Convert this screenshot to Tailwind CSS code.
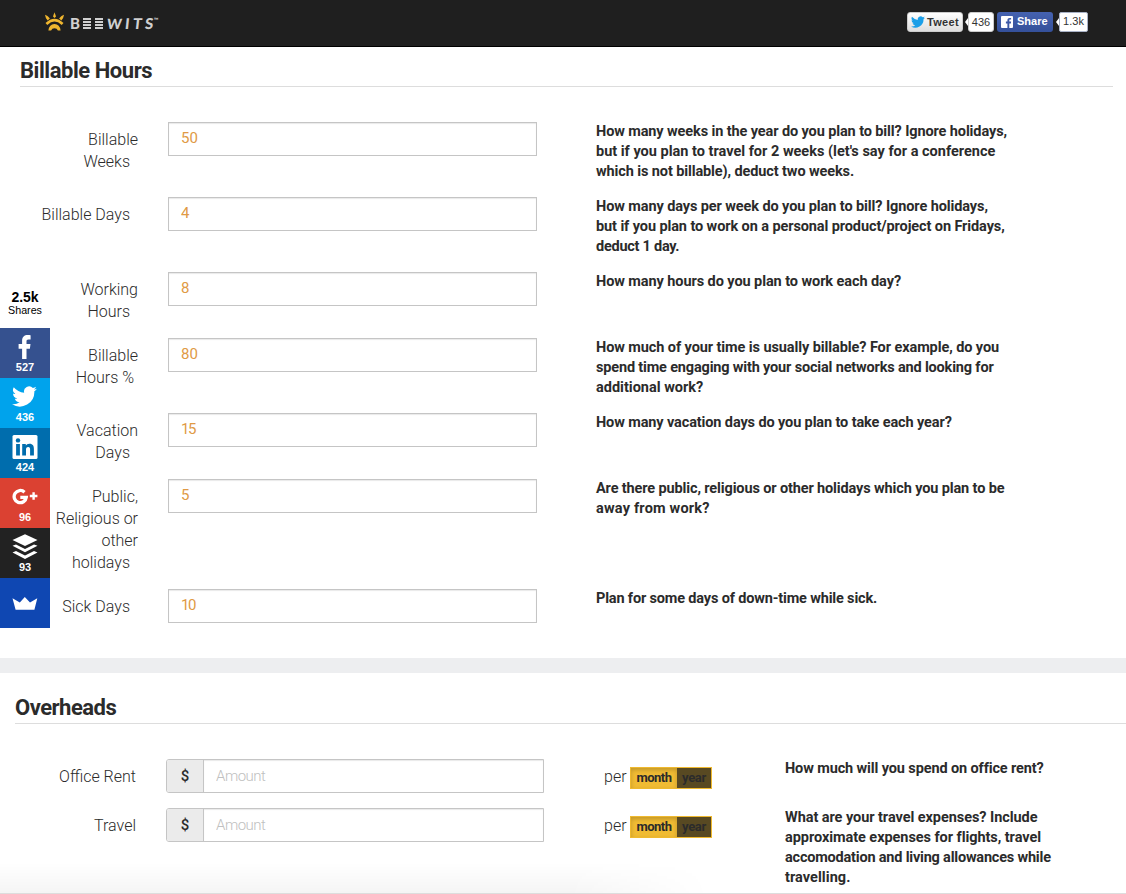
<!DOCTYPE html>
<html lang="en">
<head>
    <meta charset="UTF-8">
    <meta name="viewport" content="width=device-width, initial-scale=1.0">
    <script src="https://cdn.jsdelivr.net/npm/@tailwindcss/browser@4"></script>
    <title>Beewits - Hourly rate calculator</title>
</head>
<body class="relative w-full h-[894px] overflow-hidden bg-white text-[#2b2b2b] font-['Roboto',sans-serif]">
    <header class="h-[47px] bg-[#1f1f1f] border-b border-black flex items-start justify-between pl-[45px] pr-[38px]">
        <div class="flex pt-[12px] text-[#d0d0d0]">
            <svg class="w-[19px] h-[20px]" viewBox="0 0 19 20" fill="#f0b62f">
                <path d="M9.5 0.3 L11 4.6 L9.5 6 L8 4.6 Z"/>
                <path d="M0 2.8 Q2.6 3.6 4.9 6.4 L2.6 8.6 Q0.6 7 0 2.8 Z"/>
                <path d="M19 2.8 Q16.4 3.6 14.1 6.4 L16.4 8.6 Q18.4 7 19 2.8 Z"/>
                <path d="M1.4 12 Q9.5 4.4 17.6 12" fill="none" stroke="#f0b62f" stroke-width="2.7"/>
                <path d="M3.4 18.6 Q4.2 12 9.5 12 Q14.8 12 15.6 18.6 L12.9 18.6 Q12 16.2 9.5 16.2 Q7 16.2 6.1 18.6 Z"/>
            </svg>
            <div class="flex h-[23px] items-center pl-[6px] font-['Lato',sans-serif] font-black text-[15px] leading-none" aria-label="Beewits">
                <span class="w-[13px]">B</span>
                <span class="w-[12px] flex flex-col gap-px">
                    <i class="w-[8px] h-[2px] bg-[#d0d0d0]"></i><i class="w-[8px] h-[2px] bg-[#d0d0d0]"></i><i class="w-[8px] h-[2px] bg-[#d0d0d0]"></i><i class="w-[8px] h-[2px] bg-[#d0d0d0]"></i>
                </span>
                <span class="w-[12px] flex flex-col gap-px">
                    <i class="w-[8px] h-[2px] bg-[#d0d0d0]"></i><i class="w-[8px] h-[2px] bg-[#d0d0d0]"></i><i class="w-[8px] h-[2px] bg-[#d0d0d0]"></i><i class="w-[8px] h-[2px] bg-[#d0d0d0]"></i>
                </span>
                <span class="w-[18px] text-[14px] -skew-x-6">W</span>
                <span class="w-[8px] -skew-x-6">I</span>
                <span class="w-[12px] -skew-x-6">T</span>
                <span class="w-[9px] -skew-x-6">S</span>
                <span class="text-[6px] -mt-[7px]">™</span>
            </div>
        </div>
        <div class="flex pt-[12px] text-[11px] font-['Liberation_Sans',sans-serif]">
            <div class="w-[56px] h-[20px] rounded-[3px] border border-[#ccc] bg-linear-to-b from-white to-[#dedede] flex items-center pl-[3px] gap-[2px] font-bold text-[#333]">
                <svg class="w-[14px] h-[14px]" viewBox="0 0 24 24" fill="#1b9fe8"><path d="M23.9 4.6a10 10 0 0 1-2.8.8 5 5 0 0 0 2.1-2.7 10 10 0 0 1-3.1 1.2 4.9 4.9 0 0 0-8.4 4.5A14 14 0 0 1 1.7 3.2a4.9 4.9 0 0 0 1.5 6.5 5 5 0 0 1-2.2-.6 4.9 4.9 0 0 0 4 4.9 5 5 0 0 1-2.3.1 4.9 4.9 0 0 0 4.6 3.4A9.9 9.9 0 0 1 0 19.5 14 14 0 0 0 21.5 7.1a10 10 0 0 0 2.4-2.5z"/></svg>
                <span class="tracking-[0.3px]">Tweet</span>
            </div>
            <div class="flex items-center ml-[2px]">
                <div class="border-y-4 border-y-transparent border-r-[3px] border-r-white"></div>
                <div class="w-[26px] h-[20px] rounded-[3px] bg-white border border-[#ccc] flex items-center justify-center text-[#333]">436</div>
            </div>
            <div class="ml-[3px] w-[56px] h-[20px] rounded-[3px] bg-linear-to-b from-[#4562b0] to-[#34509a] flex items-center pl-[4px] gap-[4px] font-bold text-white">
                <svg class="w-[12px] h-[12px]" viewBox="0 0 12 12"><rect width="12" height="12" rx="1" fill="#fff"/><path d="M6.4 12V7.4H4.9V5.6h1.5V4.3c0-1.6.9-2.4 2.3-2.4h1.4v1.7H9.2c-.7 0-.9.3-.9.9v1.1h1.8l-.2 1.8H8.3V12z" fill="#3d59a6"/></svg>
                <span class="-mt-px">Share</span>
            </div>
            <div class="flex items-center ml-[3px]">
                <div class="border-y-4 border-y-transparent border-r-[3px] border-r-white"></div>
                <div class="w-[29px] h-[20px] rounded-[2px] bg-white border border-[#a9b2c6] flex items-center justify-center text-[#333] pb-px">1.3k</div>
            </div>
        </div>
    </header>

    <main>
        <section class="pl-[20px] pr-[13px] pt-[8px] h-[611px]">
            <h2 class="h-[32px] border-b border-[#ddd] text-[22px] leading-[31px] font-bold tracking-[-0.45px]">Billable Hours</h2>
            <div class="pt-[34px] text-[16px] leading-[22px] font-light">
                <div class="flex h-[75px]">
                    <label class="w-[118px] pt-[8px] text-right">Billable<br><span class="pr-[8px]">Weeks</span></label>
                    <input value="50" class="ml-[30px] mt-px w-[369px] h-[34px] border border-[#c5c5c5] px-[12px] pb-[3px] text-[15px] font-normal text-[#e09a45] shadow-[inset_0_1px_1px_rgba(0,0,0,0.09)]">
                    <p class="ml-[59px] pt-px whitespace-nowrap text-[14.5px] leading-[20px] font-bold tracking-[-0.11px]">How many weeks in the year do you plan to bill? Ignore holidays,<br><span class="tracking-normal">but if you plan to travel for 2 weeks (let's say for a conference</span><br>which is not billable), deduct two weeks.</p>
                </div>
                <div class="flex h-[75px]">
                    <label class="w-[118px] pt-[8px] text-right"><span class="pr-[8px]">Billable Days</span></label>
                    <input value="4" class="ml-[30px] mt-px w-[369px] h-[34px] border border-[#c5c5c5] px-[12px] pb-[3px] text-[15px] font-normal text-[#e09a45] shadow-[inset_0_1px_1px_rgba(0,0,0,0.09)]">
                    <p class="ml-[59px] pt-px whitespace-nowrap text-[14.5px] leading-[20px] font-bold tracking-[-0.1px]">How many days per week do you plan to bill? Ignore holidays,<br>but if you plan to work on a personal product/project on Fridays,<br><span class="tracking-[-0.25px]">deduct 1 day.</span></p>
                </div>
                <div class="flex h-[66px]">
                    <label class="w-[118px] pt-[8px] text-right">Working<br><span class="pr-[8px]">Hours</span></label>
                    <input value="8" class="ml-[30px] mt-px w-[369px] h-[34px] border border-[#c5c5c5] px-[12px] pb-[3px] text-[15px] font-normal text-[#e09a45] shadow-[inset_0_1px_1px_rgba(0,0,0,0.09)]">
                    <p class="ml-[59px] pt-px whitespace-nowrap text-[14.5px] leading-[20px] font-bold tracking-[-0.08px]">How many hours do you plan to work each day?</p>
                </div>
                <div class="flex h-[75px]">
                    <label class="w-[118px] pt-[8px] text-right">Billable<br><span class="pr-[4px]">Hours %</span></label>
                    <input value="80" class="ml-[30px] mt-px w-[369px] h-[34px] border border-[#c5c5c5] px-[12px] pb-[3px] text-[15px] font-normal text-[#e09a45] shadow-[inset_0_1px_1px_rgba(0,0,0,0.09)]">
                    <p class="ml-[59px] pt-px whitespace-nowrap text-[14.5px] leading-[20px] font-bold tracking-[-0.09px]">How much of your time is usually billable? For example, do you<br><span class="tracking-[-0.17px]">spend time engaging with your social networks and looking for</span><br><span class="tracking-normal">additional work?</span></p>
                </div>
                <div class="flex h-[66px]">
                    <label class="w-[118px] pt-[8px] text-right">Vacation<br><span class="pr-[8px]">Days</span></label>
                    <input value="15" class="ml-[30px] mt-px w-[369px] h-[34px] border border-[#c5c5c5] px-[12px] pb-[3px] text-[15px] font-normal tracking-[-1.5px] text-[#e09a45] shadow-[inset_0_1px_1px_rgba(0,0,0,0.09)]">
                    <p class="ml-[59px] pt-px whitespace-nowrap text-[14.5px] leading-[20px] font-bold tracking-[-0.12px]">How many vacation days do you plan to take each year?</p>
                </div>
                <div class="flex h-[110px]">
                    <label class="w-[118px] pt-[8px] text-right">Public,<br>Religious or<br>other<br><span class="pr-[8px]">holidays</span></label>
                    <input value="5" class="ml-[30px] mt-px w-[369px] h-[34px] border border-[#c5c5c5] px-[12px] pb-[3px] text-[15px] font-normal text-[#e09a45] shadow-[inset_0_1px_1px_rgba(0,0,0,0.09)]">
                    <p class="ml-[59px] pt-px whitespace-nowrap text-[14.5px] leading-[20px] font-bold tracking-[-0.13px]">Are there public, religious or other holidays which you plan to be<br><span class="tracking-[0.2px]">away from work?</span></p>
                </div>
                <div class="flex">
                    <label class="w-[118px] pt-[8px] text-right"><span class="pr-[8px]">Sick Days</span></label>
                    <input value="10" class="ml-[30px] mt-px w-[369px] h-[34px] border border-[#c5c5c5] px-[12px] pb-[3px] text-[15px] font-normal tracking-[-1.5px] text-[#e09a45] shadow-[inset_0_1px_1px_rgba(0,0,0,0.09)]">
                    <p class="ml-[59px] pt-px whitespace-nowrap text-[14.5px] leading-[20px] font-bold tracking-[-0.16px]">Plan for some days of down-time while sick.</p>
                </div>
            </div>
        </section>

        <div class="h-[15px] bg-[#edeef0]"></div>

        <section class="pl-[15px] pt-[19px] h-[221px]">
            <h2 class="h-[32px] border-b border-[#ddd] text-[22px] leading-[31px] font-bold tracking-[-0.5px]">Overheads</h2>
            <div class="pt-[34px] text-[16px] leading-[22px] font-light">
                <div class="flex h-[49px]">
                    <label class="w-[121px] pt-[8px] text-right">Office Rent</label>
                    <div class="ml-[30px] mt-px flex w-[378px] h-[34px] rounded-l-[3px] border border-[#c5c5c5]">
                        <span class="w-[37px] shrink-0 flex items-center justify-center rounded-l-[2px] bg-[#ebebeb] border-r border-[#c5c5c5] font-medium text-[15px]">$</span>
                        <input placeholder="Amount" class="flex-1 min-w-0 px-[12px] text-[15px] font-light tracking-[-0.5px] placeholder:text-[#c0c0c0] shadow-[inset_0_1px_1px_rgba(0,0,0,0.09)]">
                    </div>
                    <span class="ml-[60px] pt-[8px] w-[26px]">per</span>
                    <div class="mt-[9px] flex w-[82px] h-[22px] border border-[#efb92f] text-[13px] leading-[20px] font-bold">
                        <span class="w-[46px] bg-[#f0bb33] text-center tracking-[-0.5px] shadow-[inset_0_2px_4px_rgba(0,0,0,0.2)]">month</span>
                        <span class="flex-1 bg-[#584922] text-center tracking-[-0.3px]">year</span>
                    </div>
                    <p class="ml-[73px] pt-px whitespace-nowrap text-[14.5px] leading-[20px] font-bold tracking-[-0.12px]">How much will you spend on office rent?</p>
                </div>
                <div class="flex">
                    <label class="w-[121px] pt-[8px] text-right">Travel</label>
                    <div class="ml-[30px] mt-px flex w-[378px] h-[34px] rounded-l-[3px] border border-[#c5c5c5]">
                        <span class="w-[37px] shrink-0 flex items-center justify-center rounded-l-[2px] bg-[#ebebeb] border-r border-[#c5c5c5] font-medium text-[15px]">$</span>
                        <input placeholder="Amount" class="flex-1 min-w-0 px-[12px] text-[15px] font-light tracking-[-0.5px] placeholder:text-[#c0c0c0] shadow-[inset_0_1px_1px_rgba(0,0,0,0.09)]">
                    </div>
                    <span class="ml-[60px] pt-[8px] w-[26px]">per</span>
                    <div class="mt-[9px] flex w-[82px] h-[22px] border border-[#efb92f] text-[13px] leading-[20px] font-bold">
                        <span class="w-[46px] bg-[#f0bb33] text-center tracking-[-0.5px] shadow-[inset_0_2px_4px_rgba(0,0,0,0.2)]">month</span>
                        <span class="flex-1 bg-[#584922] text-center tracking-[-0.3px]">year</span>
                    </div>
                    <p class="ml-[73px] pt-px whitespace-nowrap text-[14.5px] leading-[20px] font-bold tracking-[-0.06px]">What are your travel expenses? Include<br>approximate expenses for flights, travel<br><span class="tracking-[-0.2px]">accomodation and living allowances while</span><br><span class="tracking-[0.05px]">travelling.</span></p>
                </div>
            </div>
        </section>
    </main>

    <!-- fade at the bottom of the window -->
    <div class="absolute left-0 bottom-0 w-full h-[31px] border-b border-[#ddd]">
        <div class="w-[710px] h-full bg-linear-to-b from-transparent to-black/4 mask-r-from-80% mask-r-to-100%"></div>
    </div>

    <!-- share bar -->
    <aside class="absolute left-0 top-[289px] w-[50px] text-center font-['Liberation_Sans',sans-serif]">
        <div class="h-[39px] text-black">
            <div class="text-[14px] leading-[16px] font-bold">2.5k</div>
            <div class="text-[10.7px] leading-[10px]">Shares</div>
        </div>
        <div class="text-white text-[11px] leading-[12px] font-bold">
            <div class="h-[50px] bg-[#35518f] flex flex-col items-center pt-[6px]">
                <svg class="w-[26px] h-[27px]" viewBox="0 0 26 27" fill="#fff"><path d="M10.1 25V14.7H6.6V10h3.5V6.8c0-3.8 2.3-5.8 5.6-5.8 1.3 0 2.5.1 2.9.2v4.2h-2.1c-1.7 0-2 .8-2 1.9V10h4l-.6 4.7h-3.4V25z"/></svg>
                <span>527</span>
            </div>
            <div class="h-[50px] bg-[#00a3ec] flex flex-col items-center pt-[6px]">
                <svg class="w-[26px] h-[27px]" viewBox="0 0 25 26" fill="#fff"><path d="M23.9 4.6a10 10 0 0 1-2.8.8 5 5 0 0 0 2.1-2.7 10 10 0 0 1-3.1 1.2 4.9 4.9 0 0 0-8.4 4.5A14 14 0 0 1 1.7 3.2a4.9 4.9 0 0 0 1.5 6.5 5 5 0 0 1-2.2-.6 4.9 4.9 0 0 0 4 4.9 5 5 0 0 1-2.3.1 4.9 4.9 0 0 0 4.6 3.4A9.9 9.9 0 0 1 0 19.5 14 14 0 0 0 21.5 7.1a10 10 0 0 0 2.4-2.5z"/></svg>
                <span>436</span>
            </div>
            <div class="h-[50px] bg-[#006dad] flex flex-col items-center pt-[6px]">
                <svg class="w-[26px] h-[27px]" viewBox="0 0 26 27">
                    <rect x=".5" y="1" width="25" height="24" rx="1.5" fill="#fff"/>
                    <g fill="#006dad"><circle cx="6" cy="6.4" r="2.2"/><rect x="4.1" y="10" width="3.8" height="11.5"/><path d="M10.2 10h3.6v1.6c.6-1 1.8-1.9 3.6-1.9 3.6 0 4.5 2.3 4.5 5.4v6.4h-3.8v-5.7c0-1.4-.1-2.9-1.9-2.9s-2.2 1.3-2.2 2.8v5.8h-3.8z"/></g>
                </svg>
                <span>424</span>
            </div>
            <div class="h-[50px] bg-[#db4132] flex flex-col items-center pt-[6px]">
                <svg class="w-[26px] h-[27px]" viewBox="0 0 26 27" fill="none" stroke="#fff">
                    <path d="M12.5 8.2A6.1 6.1 0 1 0 14.3 13.3H8.3" stroke-width="3.3"/>
                    <path d="M21.6 8.2v7.6M17.8 12h7.6" stroke-width="2.4"/>
                </svg>
                <span>96</span>
            </div>
            <div class="h-[50px] bg-[#222] flex flex-col items-center pt-[6px]">
                <svg class="w-[26px] h-[27px]" viewBox="0 0 26 27" fill="#fff">
                    <path d="M13 0.3 L25.5 6 L13 12 L0.5 6 Z"/>
                    <path d="M0.5 11.8 L4 10.4 L13 14.9 L22 10.4 L25.5 11.8 L13 18.3 Z"/>
                    <path d="M0.5 18.5 L4 17.1 L13 21.6 L22 17.1 L25.5 18.5 L13 25 Z"/>
                </svg>
                <span>93</span>
            </div>
            <div class="h-[50px] bg-[#0f47b2] flex flex-col items-center pt-[19px]">
                <svg class="w-[26px] h-[14px]" viewBox="0 0 26 14" fill="#fff"><path d="M0.5 1.2 L7.8 5.6 L12.8 0 L18 5.6 L25.3 1.2 L22.4 12.8 L3.6 12.8 Z"/></svg>
            </div>
        </div>
    </aside>
</body>
</html>
